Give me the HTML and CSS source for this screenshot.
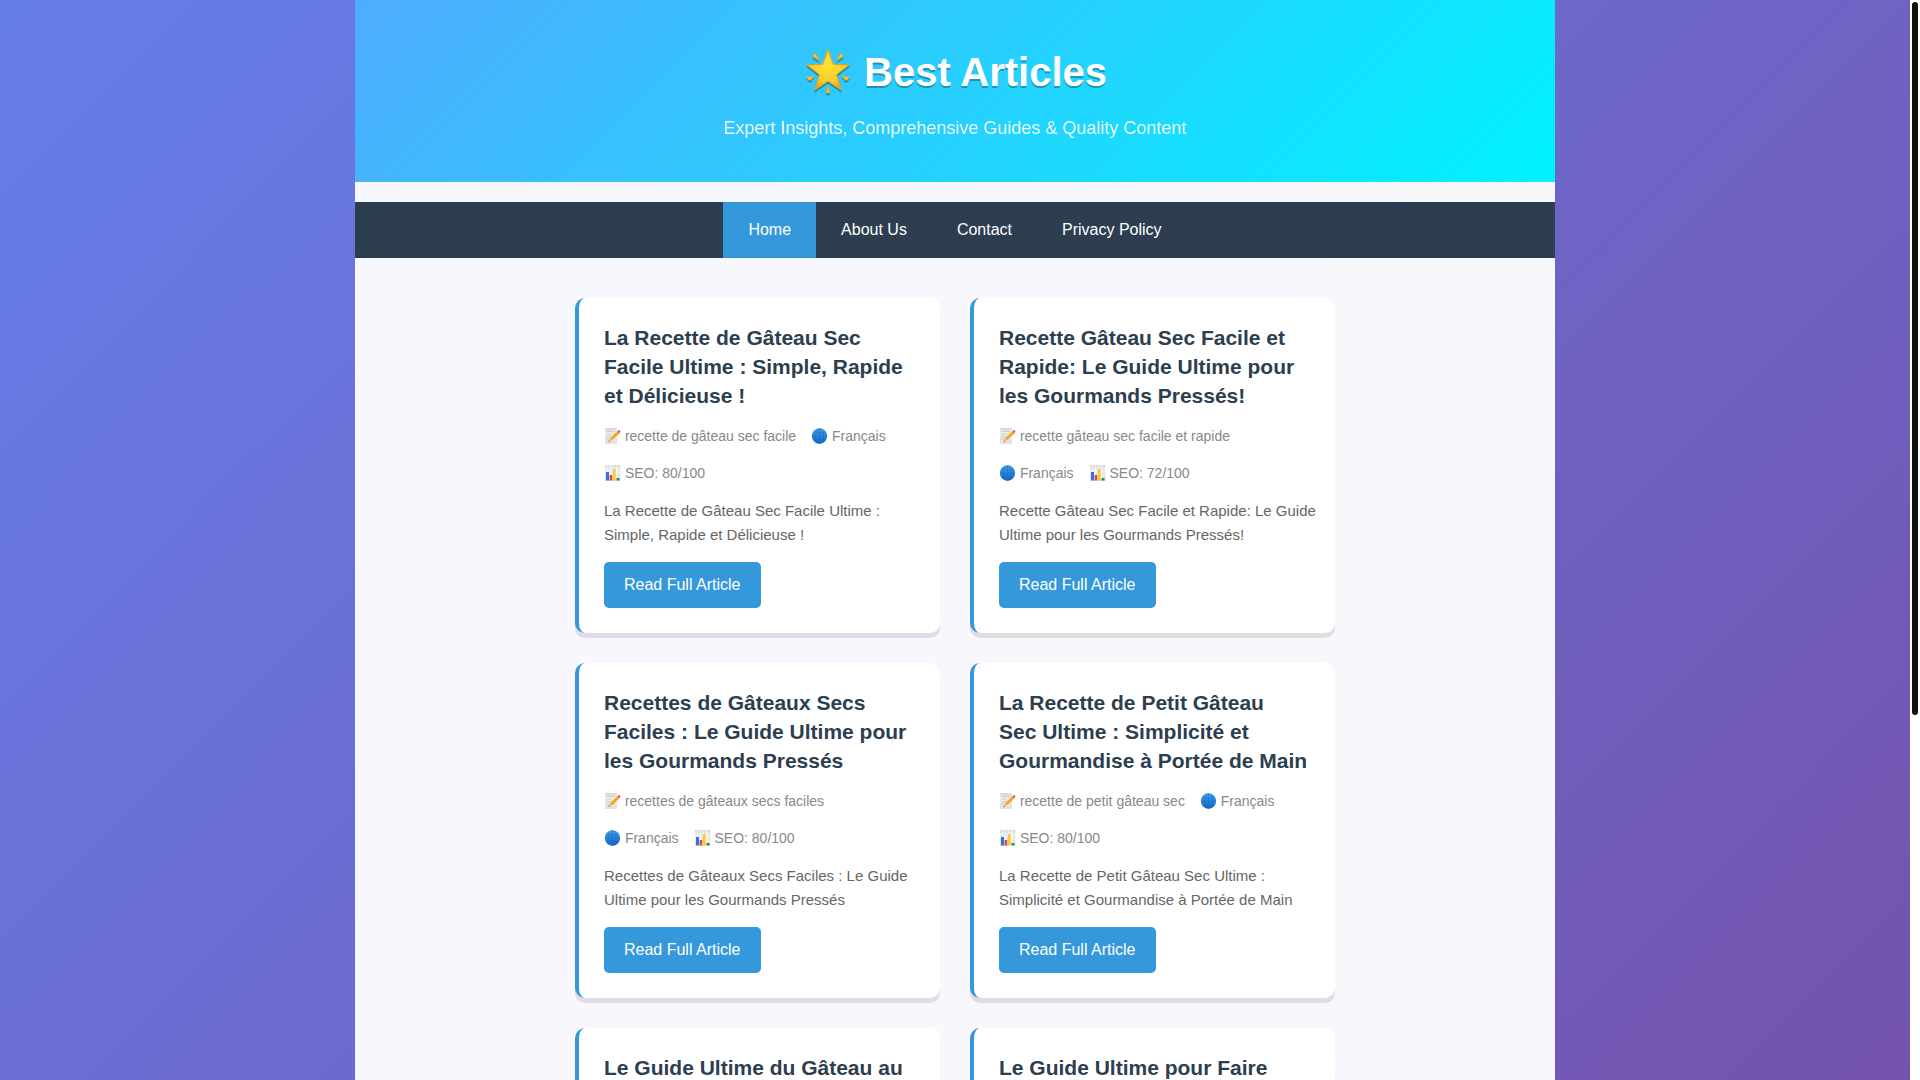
FILE: index.html
```html
<!DOCTYPE html>
<html lang="fr">

	<head>
		<meta charset="utf-8" />
		<meta name="viewport" content="width=device-width, initial-scale=1" />
		<title>Best Articles</title>
		<link rel="stylesheet" href="styles.css">
	</head>

	<body>
		<svg class="sprite" aria-hidden="true">
			<defs>
				<radialGradient id="star-fill" cx="0.5" cy="0.4" r="0.6">
					<stop offset="0" stop-color="#fee03a" />
					<stop offset="0.6" stop-color="#fbcf2e" />
					<stop offset="1" stop-color="#e6a71c" />
				</radialGradient>
				<linearGradient id="globe-fill" x1="0" y1="0" x2="0" y2="1">
					<stop offset="0" stop-color="#42a0f3" />
					<stop offset="1" stop-color="#1467c4" />
				</linearGradient>
				<linearGradient id="paper-fill" x1="0" y1="0" x2="0" y2="1">
					<stop offset="0" stop-color="#d6d6d6" />
					<stop offset="0.3" stop-color="#efefef" />
					<stop offset="1" stop-color="#e0e0e0" />
				</linearGradient>
			</defs>
			<symbol id="icon-star" viewBox="0 0 50 48">
				<path fill="url(#star-fill)" stroke="#d9a22a" stroke-width="1" stroke-linejoin="round" d="M25 1.500l5.300 14.800 16 0.500-12.700 9.900 4.700 15.500L25 33.300 11.700 42.200l4.700-15.500L3.700 16.800l16-0.500z" />
				<g fill="#fbc02d" stroke="#e0a020" stroke-width="0.600" stroke-linejoin="round">
					<path d="M10 7.500q1-2.500 3-1.500l3.300 7-6-4z" />
					<path d="M40 7.500q-1-2.500-3-1.500l-3.300 7 6-4z" />
					<path d="M4 29l7-1-3.500 4.500q-2.500 0-3.500-3.500z" />
					<path d="M46 29l-7-1 3.500 4.500q2.500 0 3.500-3.500z" />
					<path d="M25 38l2 6.500q-2 1.500-4 0z" />
				</g>
			</symbol>
			<symbol id="icon-note" viewBox="0 0 17 16">
				<path fill="url(#paper-fill)" d="M1 0h12v16H1z" />
				<path stroke="#b8b8b8" stroke-width="0.600" d="M2.500 3.500h8M2.500 6h5M2.500 8.500h4M2.500 11h3" />
				<path fill="#f7a81b" d="M13 3.500l2.200 2.200-7.400 6.800-2 -2z" />
				<path fill="#e8c79a" d="M5.800 10.500l2 2-3 1.300z" />
				<path fill="#333" d="M5.100 12.500l0.900 0.800-1.500 0.700z" />
				<path fill="#e95b62" d="M13 3.500l1.200-1.100q1-0.700 1.800 0.200t0 1.900l-0.900 1.100z" />
			</symbol>
			<symbol id="icon-globe" viewBox="0 0 17 16">
				<circle cx="8.500" cy="8" r="7.700" fill="url(#globe-fill)" />
				<g fill="none" stroke="#1260b4" stroke-width="0.500" opacity="0.700">
					<path d="M8.500 0.500v15M1 8h15M2.500 4.200q6 2 12 0M2.500 11.800q6-2 12 0" />
					<ellipse cx="8.500" cy="8" rx="4" ry="7.500" />
				</g>
			</symbol>
			<symbol id="icon-chart" viewBox="0 0 17 16">
				<path fill="url(#paper-fill)" d="M1 0h15.500v16H1z" />
				<path stroke="#fff" stroke-width="0.600" d="M3.500 0v16M6.500 0v16M9.500 0v16M12.500 0v16" />
				<path fill="#3c6ee8" d="M2 7h3v8.500H2z" />
				<path fill="#df4536" d="M5.700 10h2.500v5.500H5.700z" />
				<path fill="#fbcb2c" d="M8.900 4h2.700v11.500H8.900z" />
				<path fill="#26924c" d="M12.500 13h3v2.500h-3z" />
			</symbol>
		</svg>

		<div class="page">
			<div class="container">
				<header class="header">
					<h1><svg class="star" aria-hidden="true"><use href="#icon-star" /></svg> Best Articles</h1>
					<p>Expert Insights, Comprehensive Guides &amp; Quality Content</p>
				</header>

				<nav class="nav">
					<a class="active" href="#home">Home</a>
					<a href="#about">About Us</a>
					<a href="#contact">Contact</a>
					<a href="#privacy">Privacy Policy</a>
				</nav>

				<main class="articles">
					<article class="card">
						<h2>La Recette de Gâteau Sec Facile Ultime : Simple, Rapide et Délicieuse !</h2>
						<div class="meta">
							<span><svg class="icon" aria-hidden="true"><use href="#icon-note" /></svg> recette de gâteau sec facile</span>
							<span><svg class="icon" aria-hidden="true"><use href="#icon-globe" /></svg> Français</span>
						</div>
						<div class="meta">
							<span><svg class="icon" aria-hidden="true"><use href="#icon-chart" /></svg> SEO: 80/100</span>
						</div>
						<p>La Recette de Gâteau Sec Facile Ultime :<br>Simple, Rapide et Délicieuse !</p>
						<a class="read-more" href="#article-1">Read Full Article</a>
					</article>

					<article class="card">
						<h2>Recette Gâteau Sec Facile et Rapide: Le Guide Ultime pour les Gourmands Pressés!</h2>
						<div class="meta">
							<span><svg class="icon" aria-hidden="true"><use href="#icon-note" /></svg> recette gâteau sec facile et rapide</span>
						</div>
						<div class="meta">
							<span><svg class="icon" aria-hidden="true"><use href="#icon-globe" /></svg> Français</span>
							<span><svg class="icon" aria-hidden="true"><use href="#icon-chart" /></svg> SEO: 72/100</span>
						</div>
						<p>Recette Gâteau Sec Facile et Rapide: Le Guide<br>Ultime pour les Gourmands Pressés!</p>
						<a class="read-more" href="#article-2">Read Full Article</a>
					</article>

					<article class="card">
						<h2>Recettes de Gâteaux Secs Faciles : Le Guide Ultime pour les Gourmands Pressés</h2>
						<div class="meta">
							<span><svg class="icon" aria-hidden="true"><use href="#icon-note" /></svg> recettes de gâteaux secs faciles</span>
						</div>
						<div class="meta">
							<span><svg class="icon" aria-hidden="true"><use href="#icon-globe" /></svg> Français</span>
							<span><svg class="icon" aria-hidden="true"><use href="#icon-chart" /></svg> SEO: 80/100</span>
						</div>
						<p>Recettes de Gâteaux Secs Faciles : Le Guide<br>Ultime pour les Gourmands Pressés</p>
						<a class="read-more" href="#article-3">Read Full Article</a>
					</article>

					<article class="card">
						<h2>La Recette de Petit Gâteau<br>Sec Ultime : Simplicité et<br>Gourmandise à Portée de Main</h2>
						<div class="meta">
							<span><svg class="icon" aria-hidden="true"><use href="#icon-note" /></svg> recette de petit gâteau sec</span>
							<span><svg class="icon" aria-hidden="true"><use href="#icon-globe" /></svg> Français</span>
						</div>
						<div class="meta">
							<span><svg class="icon" aria-hidden="true"><use href="#icon-chart" /></svg> SEO: 80/100</span>
						</div>
						<p>La Recette de Petit Gâteau Sec Ultime :<br>Simplicité et Gourmandise à Portée de Main</p>
						<a class="read-more" href="#article-4">Read Full Article</a>
					</article>

					<article class="card">
						<h2>Le Guide Ultime du Gâteau au</h2>
					</article>

					<article class="card">
						<h2>Le Guide Ultime pour Faire</h2>
					</article>
				</main>
			</div>
		</div>
		<div class="scrollbar" aria-hidden="true">
			<div class="thumb"></div>
		</div>
	</body>

</html>
```
FILE: styles.css
```css
* {
	margin: 0;
	padding: 0;
	box-sizing: border-box;
}

body {
	display: flex;
	height: 100vh;
	overflow: hidden;
	font-family: "Liberation Sans", Arial, sans-serif;
	font-size: 16px;
	line-height: 26px;
	color: #333;
}

.sprite {
	position: absolute;
	width: 0;
	height: 0;
}

.page {
	flex: 1;
	overflow-y: auto;
	scrollbar-width: none;
	background: linear-gradient(135deg, #667eea 0%, #764ba2 100%) local;
}

.scrollbar {
	width: 10px;
	padding: 2px;
	background: #fff;
}

.thumb {
	height: 66vh;
	background: #111;
	border-radius: 3px;
}

.container {
	max-width: 1200px;
	min-height: 150vh;
	margin: 0 auto;
	background: rgba(255, 255, 255, 0.95);
}

.header {
	padding: 40px 20px;
	text-align: center;
	color: #fff;
	background: linear-gradient(135deg, #4facfe 0%, #00f2fe 100%);
}

.header h1 {
	margin-bottom: 10px;
	font-size: 40px;
	line-height: 64px;
	text-shadow: 0 2px 0 rgba(0, 0, 0, 0.3);
}

.header p {
	font-size: 18px;
	line-height: 28px;
	opacity: 0.9;
}

.star {
	width: 50px;
	height: 48px;
	vertical-align: -10px;
	filter: drop-shadow(0 2px 0 rgba(0, 0, 0, 0.3));
}

.nav {
	display: flex;
	flex-wrap: wrap;
	justify-content: center;
	margin-top: 20px;
	background: #2c3e50;
}

.nav a {
	padding: 15px 25px;
	color: #fff;
	text-decoration: none;
}

.nav a.active,
.nav a:hover {
	background: #3498db;
}

.articles {
	display: grid;
	grid-template-columns: repeat(auto-fit, minmax(350px, 1fr));
	gap: 30px;
	max-width: 800px;
	margin: 0 auto;
	padding: 40px 20px;
}

.card {
	padding: 25px 15px 25px 25px;
	background: #fff;
	border-left: 4px solid #3498db;
	border-radius: 10px;
	box-shadow: 0 5px 0 rgba(0, 0, 0, 0.1);
}

.card h2 {
	margin-bottom: 15px;
	font-size: 21px;
	line-height: 29px;
	color: #2c3e50;
}

.meta {
	display: flex;
	flex-wrap: wrap;
	gap: 15px;
	margin-bottom: 15px;
	font-size: 14px;
	line-height: 22px;
	color: #888;
}

.icon {
	width: 17px;
	height: 16px;
	vertical-align: -3px;
}

.card p {
	margin-bottom: 15px;
	font-size: 15px;
	line-height: 24px;
	color: #666;
}

.read-more {
	display: inline-block;
	padding: 10px 20px;
	color: #fff;
	text-decoration: none;
	background: #3498db;
	border-radius: 5px;
}
```
